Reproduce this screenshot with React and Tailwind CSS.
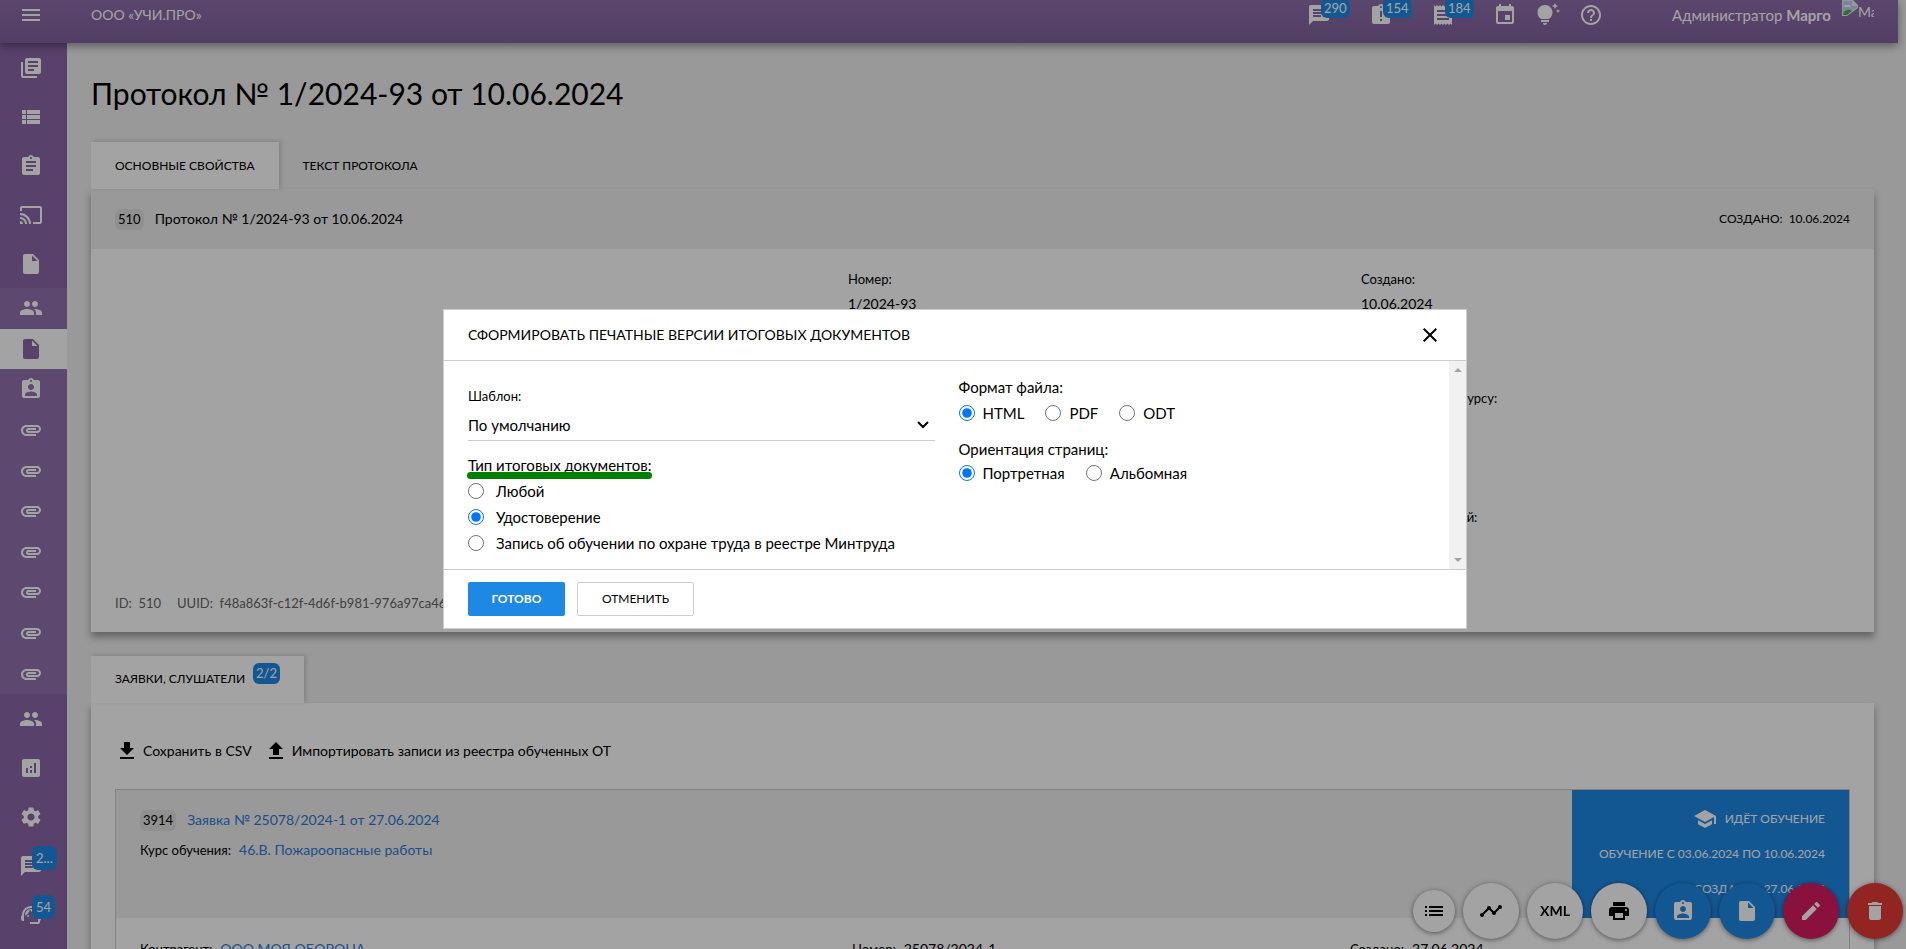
import clsx from 'clsx';
import {
  MdAnalytics,
  MdAssignment,
  MdAssignmentInd,
  MdAssignmentLate,
  MdAttachment,
  MdCast,
  MdChat,
  MdClose,
  MdDelete,
  MdEdit,
  MdEvent,
  MdFileDownload,
  MdFileUpload,
  MdHelpOutline,
  MdInsertDriveFile,
  MdLibraryBooks,
  MdList,
  MdMenu,
  MdPeople,
  MdPrint,
  MdReceipt,
  MdSchool,
  MdSettings,
  MdSupportAgent,
  MdTimeline,
  MdTipsAndUpdates,
  MdViewList,
} from 'react-icons/md';

const topLinks = [
  { icon: MdLibraryBooks, title: 'Каталог' },
  { icon: MdViewList, title: 'Список' },
  { icon: MdAssignment, title: 'Заявки' },
  { icon: MdCast, title: 'Вебинары' },
  { icon: MdInsertDriveFile, title: 'Документы' },
];

const groupLinks = [
  { icon: MdPeople, title: 'Слушатели' },
  { icon: MdInsertDriveFile, title: 'Протоколы', active: true },
  { icon: MdAssignmentInd, title: 'Удостоверения' },
  { icon: MdAttachment, title: 'Вложения 1' },
  { icon: MdAttachment, title: 'Вложения 2' },
  { icon: MdAttachment, title: 'Вложения 3' },
  { icon: MdAttachment, title: 'Вложения 4' },
  { icon: MdAttachment, title: 'Вложения 5' },
  { icon: MdAttachment, title: 'Вложения 6' },
  { icon: MdAttachment, title: 'Вложения 7' },
];

const bottomLinks = [
  { icon: MdPeople, title: 'Пользователи' },
  { icon: MdAnalytics, title: 'Отчёты' },
  { icon: MdSettings, title: 'Настройки' },
  { icon: MdChat, title: 'Сообщения', badge: '2...' },
  { icon: MdSupportAgent, title: 'Поддержка', badge: '54' },
];

const actions = [
  { icon: MdTimeline, title: 'История', color: 'bg-white text-black' },
  { text: 'XML', title: 'XML', color: 'bg-white text-black' },
  { icon: MdPrint, title: 'Печать', color: 'bg-white text-black' },
  { icon: MdAssignmentInd, title: 'Удостоверения', color: 'bg-[#1e88e5] text-white' },
  { icon: MdInsertDriveFile, title: 'Документ', color: 'bg-[#1e88e5] text-white' },
  { icon: MdEdit, title: 'Изменить', color: 'bg-[#d81b60] text-white' },
  { icon: MdDelete, title: 'Удалить', color: 'bg-[#e53935] text-white' },
];

function SideLink({ item, className }) {
  const Icon = item.icon;
  return (
    <a
      href="#"
      title={item.title}
      className={clsx(
        'flex items-center pl-[19px]',
        item.active ? 'bg-white text-[#8a68a8]' : 'text-white',
        className
      )}
    >
      <span className="relative">
        <Icon className="size-6" />
        {item.badge && (
          <span className="absolute -top-2 left-[13px] rounded-md bg-[#1e88e5] px-1 text-[13px] leading-6 text-white">
            {item.badge}
          </span>
        )}
      </span>
    </a>
  );
}

function Sidebar() {
  return (
    <nav className="flex w-[67px] shrink-0 flex-col bg-[#8a68a8]">
      {topLinks.map((item) => (
        <SideLink key={item.title} item={item} className="h-[49px] shrink-0" />
      ))}
      <div className="flex h-[406px] shrink-0 flex-col bg-[#9272ae]">
        {groupLinks.map((item) => (
          <SideLink key={item.title} item={item} className="flex-1" />
        ))}
      </div>
      {bottomLinks.map((item) => (
        <SideLink key={item.title} item={item} className="h-[49px] shrink-0" />
      ))}
    </nav>
  );
}

function HeaderIcon({ icon: Icon, title, badge, className }) {
  return (
    <button type="button" title={title} className={clsx('relative', className)}>
      <Icon className="size-6" />
      {badge && (
        <span className="absolute -top-[5px] left-[14px] rounded-md bg-[#1e88e5] px-[3px] text-[13px] leading-5">
          {badge}
        </span>
      )}
    </button>
  );
}

function Header() {
  return (
    <header className="relative z-10 mr-2 flex h-[43px] items-start bg-linear-to-b from-[#8f6eac] to-[#81619e] pt-[3px] text-white shadow-[0_3px_8px_rgba(0,0,0,0.4)]">
      <button type="button" title="Меню" className="ml-[19px]">
        <MdMenu className="size-6" />
      </button>
      <span className="ml-12 text-sm leading-6">ООО «УЧИ.ПРО»</span>
      <div className="ml-auto flex">
        <HeaderIcon icon={MdChat} title="Сообщения" badge="290" className="mr-[38px]" />
        <HeaderIcon icon={MdAssignmentLate} title="Задачи" badge="154" className="mr-[38px]" />
        <HeaderIcon icon={MdReceipt} title="Счета" badge="184" className="mr-[38px]" />
        <HeaderIcon icon={MdEvent} title="Календарь" className="mr-[19px]" />
        <HeaderIcon icon={MdTipsAndUpdates} title="Подсказки" className="mr-[19px]" />
        <HeaderIcon icon={MdHelpOutline} title="Помощь" />
      </div>
      <span className="ml-[69px] text-[15px] leading-6">
        Администратор <b>Марго</b>
      </span>
      <span className="-mt-[3px] mr-6 ml-[11px] flex w-8 overflow-hidden text-sm leading-6">
        <svg viewBox="0 0 16 16" className="size-4 shrink-0">
          <path d="M0 0h11l5 5v3L5 16H0z" fill="#e8eef8" />
          <path d="M1 1h9v5h5v1.500L5 14H1z" fill="#b9d3f3" />
          <path d="M2 7c0-2 2-3 3-1.500C6 4 9 5 8.500 7z" fill="#fff" />
          <path d="M1 14c2-5 6-5 9-3l-5 4H1z" fill="#4caf3f" />
        </svg>
        Марго
      </span>
    </header>
  );
}

function Field({ label, value, className }) {
  return (
    <div className={className}>
      <div className="text-[13px] leading-5">{label}</div>
      <div className="pt-1 text-sm leading-[22px]">{value}</div>
    </div>
  );
}

function ProtocolCard() {
  return (
    <section className="shadow-[0_5px_7px_rgba(0,0,0,0.35)]">
      <div className="flex h-[60px] items-center bg-[#efefef] px-6">
        <span className="rounded-md bg-[#e2e2e2] px-[3px] text-[13px] leading-[21px]">510</span>
        <h2 className="ml-[11px] text-sm">Протокол № 1/2024-93 от 10.06.2024</h2>
        <span className="ml-auto text-xs">СОЗДАНО:&nbsp; 10.06.2024</span>
      </div>
      <div className="flex h-[383px] flex-col bg-white pt-5">
        <div className="grid grid-cols-[757px_1fr_1fr] gap-y-[71px]">
          <Field label="Номер:" value="1/2024-93" className="col-start-2 h-12" />
          <Field label="Создано:" value="10.06.2024" className="h-12" />
          <Field label="Кол-во часов по курсу:" value="16" className="col-start-3 h-12" />
          <Field label="Число слушателей:" value="2" className="col-start-3 h-12" />
        </div>
        <div className="mt-auto flex gap-4 px-6 pb-[18px] text-[13px] leading-[22px] text-[#666]">
          <span>ID:&nbsp; 510</span>
          <span>UUID:&nbsp; f48a863f-c12f-4d6f-b981-976a97ca46a1</span>
        </div>
      </div>
    </section>
  );
}

function RequestCard() {
  return (
    <article className="border border-[#ccc]">
      <div className="flex h-32 bg-[#efefef]">
        <div className="px-6 pt-[18px]">
          <div className="flex items-center">
            <span className="rounded-md bg-[#e2e2e2] px-[3px] text-[13px] leading-[21px]">3914</span>
            <a href="#" className="ml-[11px] text-sm leading-6 text-[#2f7bd6]">
              Заявка № 25078/2024-1 от 27.06.2024
            </a>
          </div>
          <div className="pt-[5px] leading-6">
            <span className="text-[13px]">Курс обучения:</span>
            <a href="#" className="ml-2 text-sm text-[#2f7bd6]">
              46.В. Пожароопасные работы
            </a>
          </div>
        </div>
        <div className="ml-auto flex w-[277px] flex-col items-end bg-[#1e88e5] px-6 pt-[17px] text-xs whitespace-nowrap text-white">
          <div className="flex h-[35px] items-start gap-2 leading-6">
            <MdSchool className="size-6" />
            ИДЁТ ОБУЧЕНИЕ
          </div>
          <div className="h-[35px] leading-6">ОБУЧЕНИЕ С 03.06.2024 ПО 10.06.2024</div>
          <div className="leading-6">СОЗДАНО:&nbsp; 27.06.2024</div>
        </div>
      </div>
      <div className="flex bg-white pt-[18px] pl-6 leading-6">
        <div className="w-[712px]">
          <span className="text-[13px]">Контрагент:</span>
          <a href="#" className="ml-2 text-sm text-[#2f7bd6]">
            ООО МОЯ ОБОРОНА
          </a>
        </div>
        <div className="w-[498px]">
          <span className="text-[13px]">Номер:</span>
          <span className="ml-2 text-sm">25078/2024-1</span>
        </div>
        <div>
          <span className="text-[13px]">Создано:</span>
          <span className="ml-2 text-sm">27.06.2024</span>
        </div>
      </div>
    </article>
  );
}

function RequestsCard() {
  return (
    <section className="min-h-[300px] bg-white px-6 pt-9 shadow-[0_5px_7px_rgba(0,0,0,0.35)]">
      <div className="flex h-[50px] items-start gap-3 text-sm leading-6">
        <button type="button" className="flex items-center gap-1">
          <MdFileDownload className="size-6" />
          Сохранить в CSV
        </button>
        <button type="button" className="flex items-center gap-1">
          <MdFileUpload className="size-6" />
          Импортировать записи из реестра обученных ОТ
        </button>
      </div>
      <RequestCard />
    </section>
  );
}

function ActionBar() {
  return (
    <div className="fixed right-[3px] bottom-[10px] flex items-center gap-2">
      <button
        type="button"
        title="Список"
        className="flex size-[42px] items-center justify-center rounded-full bg-white shadow-[0_1px_5px_rgba(0,0,0,0.5)]"
      >
        <MdList className="size-6" />
      </button>
      {actions.map(({ icon: Icon, text, title, color }) => (
        <button
          key={title}
          type="button"
          title={title}
          className={clsx(
            'flex size-14 items-center justify-center rounded-full text-sm font-bold shadow-[0_1px_5px_rgba(0,0,0,0.5)]',
            color
          )}
        >
          {Icon ? <Icon className="size-6" /> : text}
        </button>
      ))}
    </div>
  );
}

function Radio({ name, label, checked, wide }) {
  return (
    <label className={clsx('flex items-center', wide ? 'gap-3' : 'gap-2')}>
      <input type="radio" name={name} defaultChecked={checked} className="size-4" />
      {label}
    </label>
  );
}

function PrintDialog() {
  return (
    <div
      role="dialog"
      aria-labelledby="dialog-title"
      className="flex w-[1024px] flex-col border border-[#ccc] bg-white"
    >
      <div className="flex h-[51px] items-center border-b border-[#ccc] px-6">
        <h2 id="dialog-title" className="text-sm">
          СФОРМИРОВАТЬ ПЕЧАТНЫЕ ВЕРСИИ ИТОГОВЫХ ДОКУМЕНТОВ
        </h2>
        <button type="button" title="Закрыть" className="ml-auto">
          <MdClose className="size-6" />
        </button>
      </div>

      <div className="flex h-[208px] text-[15px]">
        <div className="grid flex-1 grid-cols-2 gap-6 px-6">
          <div className="pt-[25px] leading-5">
            <label htmlFor="template" className="block text-[13px]">
              Шаблон:
            </label>
            <div className="relative">
              <select
                id="template"
                className="h-[35px] w-full appearance-none border-b border-[#ccc] bg-white pt-[3px]"
              >
                <option>По умолчанию</option>
              </select>
              <svg
                viewBox="0 0 12 8"
                className="pointer-events-none absolute top-[15px] right-[6px] h-2 w-3"
                fill="none"
                stroke="black"
                strokeWidth="2"
              >
                <path d="M1 1l5 5 5-5" />
              </svg>
            </div>
            <fieldset className="mt-[14px]">
              <legend className="relative">
                Тип итоговых документов:
                <span className="absolute top-[17px] right-0 -left-px h-[7px] rounded-sm bg-[#008000]" />
              </legend>
              <div className="flex flex-col gap-[6px] pt-[6px]">
                <Radio wide name="type" label="Любой" />
                <Radio wide name="type" label="Удостоверение" checked />
                <Radio
                  wide
                  name="type"
                  label="Запись об обучении по охране труда в реестре Минтруда"
                />
              </div>
            </fieldset>
          </div>
          <div className="pt-4 leading-5">
            <fieldset>
              <legend>Формат файла:</legend>
              <div className="flex gap-[21px] pt-[6px]">
                <Radio name="format" label="HTML" checked />
                <Radio name="format" label="PDF" />
                <Radio name="format" label="ODT" />
              </div>
            </fieldset>
            <fieldset className="mt-4">
              <legend>Ориентация страниц:</legend>
              <div className="flex gap-[21px] pt-1">
                <Radio name="orientation" label="Портретная" checked />
                <Radio name="orientation" label="Альбомная" />
              </div>
            </fieldset>
          </div>
        </div>
        <div className="flex w-[17px] flex-col items-center justify-between bg-[#f1f1f1] py-[7px]">
          <svg viewBox="0 0 8 4" className="h-1 w-2 fill-[#a3a3a3]">
            <path d="M0 4l4-4 4 4z" />
          </svg>
          <svg viewBox="0 0 8 4" className="h-1 w-2 fill-[#a3a3a3]">
            <path d="M0 0l4 4 4-4z" />
          </svg>
        </div>
      </div>

      <div className="flex h-[59px] items-center gap-3 border-t border-[#ccc] px-6 text-xs">
        <button type="button" className="h-[34px] w-[97px] rounded-xs bg-[#1e88e5] font-bold text-white">
          ГОТОВО
        </button>
        <button type="button" className="h-[34px] w-[117px] rounded-xs border border-[#ccc]">
          ОТМЕНИТЬ
        </button>
      </div>
    </div>
  );
}

export default function App() {
  return (
    <div className="flex h-screen flex-col overflow-hidden bg-[#efefef] font-['Lato','Open_Sans',sans-serif] text-black">
      <Header />
      <div className="flex min-h-0 flex-1">
        <Sidebar />
        <main className="min-w-0 flex-1 pr-8 pl-6">
          <h1 className="h-[99px] pt-8 text-3xl leading-9">Протокол № 1/2024-93 от 10.06.2024</h1>
          <div className="flex h-[47px] text-xs">
            <button type="button" className="bg-white px-6 shadow-[2px_-1px_4px_rgba(0,0,0,0.15)]">
              ОСНОВНЫЕ СВОЙСТВА
            </button>
            <button type="button" className="px-6">
              ТЕКСТ ПРОТОКОЛА
            </button>
          </div>
          <ProtocolCard />
          <div className="mt-6 flex h-[47px] text-xs">
            <button
              type="button"
              className="flex items-start bg-white px-6 shadow-[2px_-1px_4px_rgba(0,0,0,0.15)]"
            >
              <span className="pt-3 leading-[22px]">ЗАЯВКИ, СЛУШАТЕЛИ</span>
              <span className="mt-[7px] ml-2 rounded-md bg-[#1e88e5] px-[3px] text-[13px] leading-[21px] text-white">
                2/2
              </span>
            </button>
          </div>
          <RequestsCard />
        </main>
      </div>
      <ActionBar />
      <div className="fixed inset-0 z-20 flex items-center justify-center bg-black/36 pb-[11px] pl-1">
        <PrintDialog />
      </div>
    </div>
  );
}
